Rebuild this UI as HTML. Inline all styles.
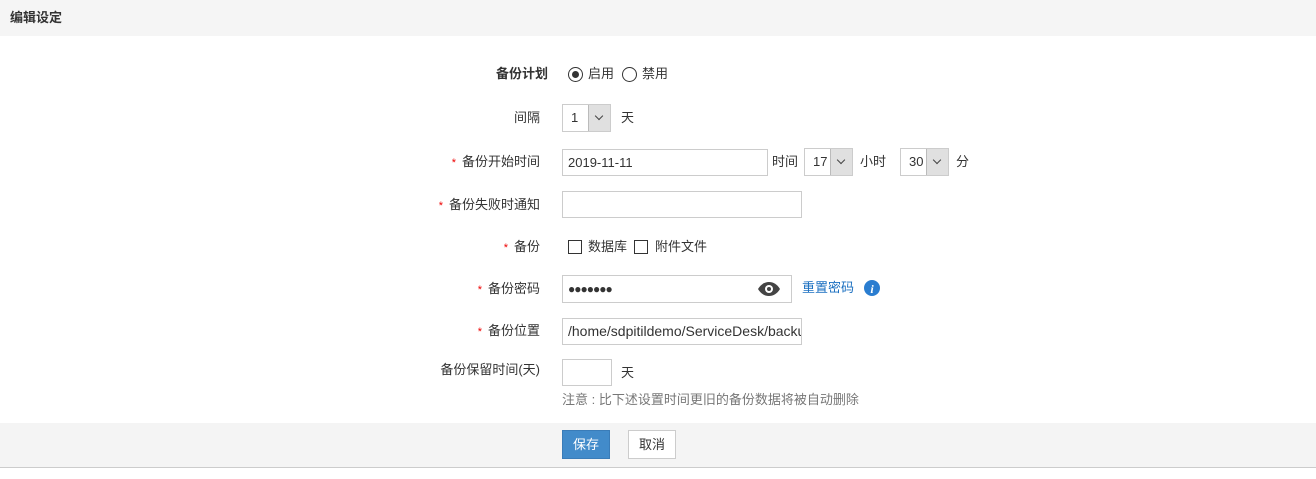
<!DOCTYPE html><html><head><meta charset="utf-8"><style>
body{margin:0;width:1316px;height:479px;background:#fff;font-family:"Liberation Sans","Noto Sans CJK SC",sans-serif;font-size:13px;color:#333;position:relative;overflow:hidden}
.a{position:absolute;white-space:nowrap;line-height:16px}
.hd{left:0;top:0;width:1316px;height:36px;background:#f5f5f5}
.lb{text-align:right;width:300px;line-height:16px}
.st{color:#e00;font-size:11px;margin-right:6px}
.box{border:1px solid #ccc;background:#fff;box-sizing:border-box}
.sel{border:1px solid #ccc;box-sizing:border-box;height:28px;line-height:26px;padding-left:8px}
.sel i{position:absolute;right:0;top:0;width:21px;height:26px;background:#e0e0e0;border-left:1px solid #bbb}
.sel i:after{content:"";position:absolute;left:7px;top:8px;width:5px;height:5px;border-right:1px solid #444;border-bottom:1px solid #444;transform:rotate(45deg)}
.cb{width:14px;height:14px;border:1px solid #333;box-sizing:border-box}
.rd{width:15px;height:15px;border:1px solid #333;border-radius:50%;box-sizing:border-box}
</style></head><body>
<div class="a hd"></div>
<div class="a" style="left:10px;top:10px;font-weight:bold">编辑设定</div>

<div class="a lb" style="left:248px;top:66px;font-weight:bold">备份计划</div>
<div class="a rd" style="left:568px;top:67px"><div style="position:absolute;left:3px;top:3px;width:7px;height:7px;border-radius:50%;background:#333"></div></div>
<div class="a" style="left:588px;top:66px">启用</div>
<div class="a rd" style="left:622px;top:67px"></div>
<div class="a" style="left:642px;top:66px">禁用</div>

<div class="a lb" style="left:240px;top:110px">间隔</div>
<div class="a sel" style="left:562px;top:104px;width:49px">1<i></i></div>
<div class="a" style="left:621px;top:110px">天</div>

<div class="a lb" style="left:240px;top:154px"><span class="st">*</span>备份开始时间</div>
<div class="a box" style="left:562px;top:149px;width:206px;height:27px;line-height:25px;padding-left:5px">2019-11-11</div>
<div class="a" style="left:772px;top:154px">时间</div>
<div class="a sel" style="left:804px;top:148px;width:49px;line-height:26px">17<i></i></div>
<div class="a" style="left:860px;top:154px">小时</div>
<div class="a sel" style="left:900px;top:148px;width:49px;line-height:26px">30<i></i></div>
<div class="a" style="left:956px;top:154px">分</div>

<div class="a lb" style="left:240px;top:197px"><span class="st">*</span>备份失败时通知</div>
<div class="a box" style="left:562px;top:191px;width:240px;height:27px"></div>

<div class="a lb" style="left:240px;top:239px"><span class="st">*</span>备份</div>
<div class="a cb" style="left:568px;top:240px"></div>
<div class="a" style="left:588px;top:239px">数据库</div>
<div class="a cb" style="left:634px;top:240px"></div>
<div class="a" style="left:655px;top:239px">附件文件</div>

<div class="a lb" style="left:240px;top:281px"><span class="st">*</span>备份密码</div>
<div class="a box" style="left:562px;top:275px;width:230px;height:28px;line-height:26px;padding-left:5px;font-size:12px;letter-spacing:-1px">●●●●●●●</div>
<svg class="a" style="left:757px;top:281px" width="24" height="16" viewBox="0 0 24 16"><path d="M1 8C4 3 8 1 12 1s8 2 11 7c-3 5-7 7-11 7S4 13 1 8z" fill="#444"/><circle cx="12" cy="8" r="4" fill="#fff"/><circle cx="12" cy="8" r="2" fill="#444"/></svg>
<div class="a" style="left:802px;top:280px;color:#1a6fc0">重置密码</div>
<svg class="a" style="left:864px;top:280px" width="16" height="16"><circle cx="8" cy="8" r="8" fill="#2a7dd0"/><text x="8" y="13" fill="#fff" font-size="12" font-weight="bold" font-style="italic" text-anchor="middle" font-family="Liberation Serif,serif">i</text></svg>

<div class="a lb" style="left:240px;top:323px"><span class="st">*</span>备份位置</div>
<div class="a box" style="left:562px;top:318px;width:240px;height:27px;line-height:25px;padding-left:5px;overflow:hidden;font-size:14px">/home/sdpitildemo/ServiceDesk/backup</div>

<div class="a lb" style="left:240px;top:362px">备份保留时间(天)</div>
<div class="a box" style="left:562px;top:359px;width:50px;height:27px"></div>
<div class="a" style="left:621px;top:365px">天</div>
<div class="a" style="left:562px;top:392px;color:#777">注意 : 比下述设置时间更旧的备份数据将被自动删除</div>

<div class="a" style="left:0;top:423px;width:1316px;height:44px;background:#f4f4f4;border-bottom:1px solid #ccc"></div>
<div class="a" style="left:562px;top:430px;width:48px;height:29px;background:#428bca;border:1px solid #3a7cb8;box-sizing:border-box;color:#fff;text-align:center;line-height:27px">保存</div>
<div class="a" style="left:628px;top:430px;width:48px;height:29px;background:#fff;border:1px solid #ccc;box-sizing:border-box;text-align:center;line-height:27px">取消</div>
</body></html>
